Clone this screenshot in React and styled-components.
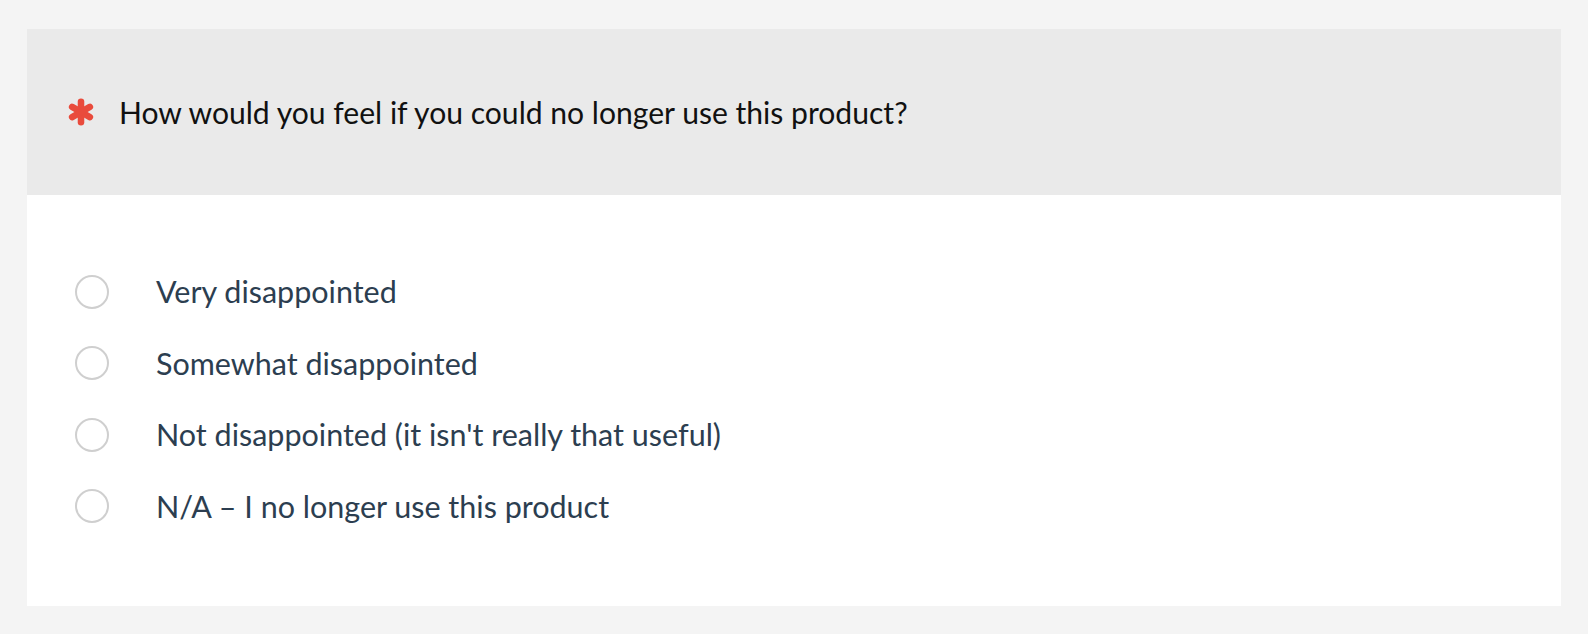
import React from "react";
import styled, { createGlobalStyle } from "styled-components";

const GlobalStyle = createGlobalStyle`
  html, body {
    margin: 0;
    padding: 0;
    background: #f4f4f4;
  }
  body {
    font-family: Lato, "Open Sans", "Liberation Sans", sans-serif;
  }
`;

const Page = styled.div`
  padding: 29px 27px 28px 27px;
`;

const Card = styled.div`
  background: #ffffff;
  display: flex;
  flex-direction: column;
`;

const Header = styled.div`
  background: #eaeaea;
  height: 166px;
  display: flex;
  align-items: center;
  padding-left: 40px;
  gap: 24px;
`;

const Asterisk = styled.svg`
  width: 28px;
  height: 28px;
  flex-shrink: 0;
`;

const Question = styled.h2`
  margin: 0;
  font-family: Lato, "Open Sans", sans-serif;
  font-weight: 400;
  font-size: 30.1px;
  color: #111111;
  line-height: 1.2;
`;

const Options = styled.div`
  display: flex;
  flex-direction: column;
  padding: 61px 0 64px 48px;
`;

const Option = styled.label`
  display: flex;
  align-items: center;
  height: 71.5px;
  gap: 47px;
  cursor: pointer;
`;

const Radio = styled.span`
  width: 34px;
  height: 34px;
  box-sizing: border-box;
  border: 2px solid #cfcfcf;
  border-radius: 50%;
  background: #ffffff;
  flex-shrink: 0;
`;

const OptionText = styled.span`
  font-family: Lato, "Open Sans", sans-serif;
  font-size: 30.5px;
  color: #2c3e50;
  line-height: 1.2;
`;

const options = [
  "Very disappointed",
  "Somewhat disappointed",
  "Not disappointed (it isn't really that useful)",
  "N/A \u2013 I no longer use this product",
];

export default function App() {
  return (
    <>
      <GlobalStyle />
      <Page>
        <Card>
          <Header>
            <Asterisk viewBox="0 0 24 24" aria-hidden="true">
              <g stroke="#e94b3c" strokeWidth="5.6" strokeLinecap="round">
                <line x1="12" y1="3.2" x2="12" y2="20.8" />
                <line x1="4.4" y1="7.6" x2="19.6" y2="16.4" />
                <line x1="4.4" y1="16.4" x2="19.6" y2="7.6" />
              </g>
            </Asterisk>
            <Question>How would you feel if you could no longer use this product?</Question>
          </Header>
          <Options>
            {options.map((o) => (
              <Option key={o}>
                <Radio />
                <OptionText>{o}</OptionText>
              </Option>
            ))}
          </Options>
        </Card>
      </Page>
    </>
  );
}
